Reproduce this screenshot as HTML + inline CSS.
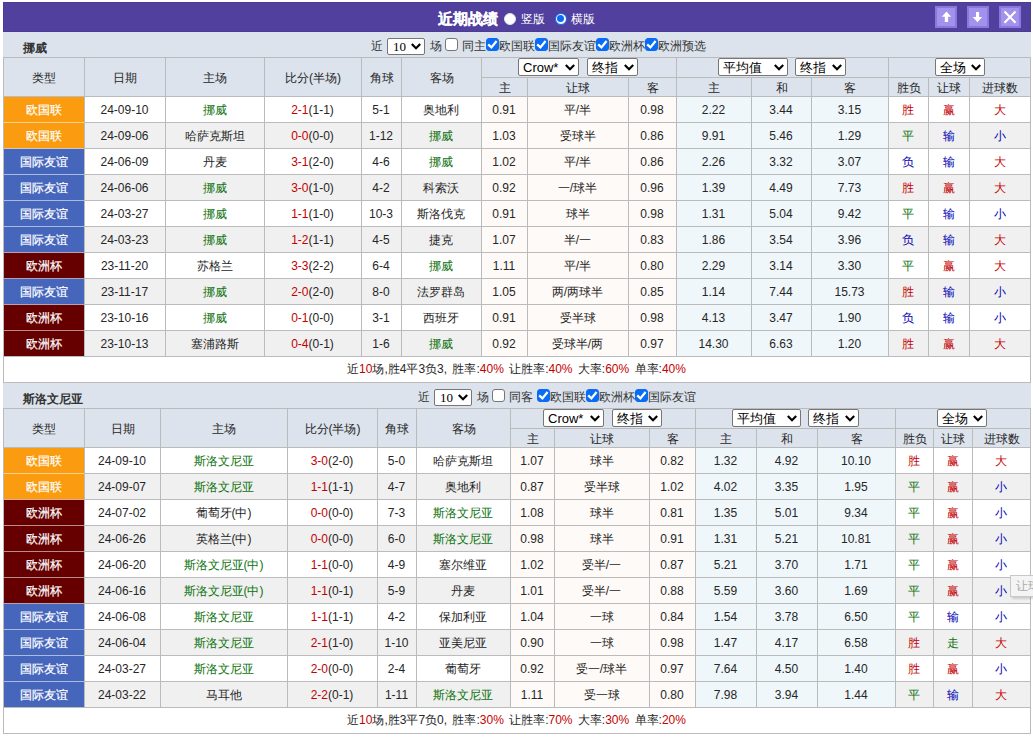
<!DOCTYPE html><html><head><meta charset="utf-8"><style>
html,body{margin:0;padding:0;background:#fff;}
body{width:1033px;height:737px;overflow:hidden;position:relative;font-family:"Liberation Sans", sans-serif;font-size:12px;color:#262626;}
div,span{box-sizing:border-box;}
body div{position:absolute;}
.t{text-align:center;white-space:nowrap;overflow:visible;}
.sel{background:#fff;border:1px solid #767676;border-radius:2px;color:#000;font-size:13px;}
.sel .lb{position:absolute;left:4px;top:0;line-height:17px;}
.filt{white-space:nowrap;height:20px;line-height:17px;color:#333;font-size:12px}
.filt span{display:inline-block;vertical-align:top;position:relative}
.ft{margin-right:4px}
.fsel{width:38px;height:17px;border:1px solid #767676;border-radius:2px;background:#fff;color:#000;font-family:"Liberation Serif",serif;font-size:13px;padding-left:5px;line-height:15px;margin-right:5px}
.cbx{width:13px;height:13px;border:1px solid #767676;border-radius:3px;background:#fff;margin:0 4px 0 0}
.cbx.on{background:#0a6cf5;border-color:#0a6cf5;margin-right:0}
.cbx svg{position:absolute;left:-1px;top:-1px}
</style></head><body><div style="left:3px;top:2px;width:1028px;height:30px;background:#51409d;box-shadow:inset 0 0 0 1px #4a3c93"></div>
<div style="left:3px;top:32px;width:1028px;height:1px;background:#e4e4f8;"></div>
<div class="t" style="left:438px;top:4px;width:70px;height:30px;line-height:30px;text-align:left;color:#fff;font-weight:bold;font-size:15px;-webkit-text-stroke:0.25px #fff">近期战绩</div>
<div style="left:504px;top:12.5px;width:12px;height:12px;border-radius:50%;background:#fff;box-sizing:border-box;border:1px solid #e0e0ea"></div>
<div class="t" style="left:521px;top:4px;width:30px;height:30px;line-height:30px;text-align:left;color:#fff">竖版</div>
<div style="left:554.5px;top:12.5px;width:12px;height:12px;border-radius:50%;background:#fff;box-sizing:border-box;border:1.2px solid #0a6cf5"><div style="left:1.4px;top:1.4px;width:7px;height:7px;border-radius:50%;background:#0a6cf5"></div></div>
<div class="t" style="left:571px;top:4px;width:30px;height:30px;line-height:30px;text-align:left;color:#fff">横版</div>
<div style="left:935px;top:6px;width:22px;height:22px;background:#8a79da;"><div style="left:2px;top:2px;width:18px;height:18px;background:#a392ed"><svg width="18" height="18" viewBox="0 0 18 18" style="position:absolute;left:0;top:0"><path d="M9.5 3.6 L14.2 8.7 L11.1 8.7 L11.1 14 L7.8 14 L7.8 8.7 L4.8 8.7 Z" fill="#fff"/></svg></div></div>
<div style="left:967px;top:6px;width:22px;height:22px;background:#8a79da;"><div style="left:2px;top:2px;width:18px;height:18px;background:#a392ed"><svg width="18" height="18" viewBox="0 0 18 18" style="position:absolute;left:0;top:0"><path d="M8.5 14.2 L13.2 8.9 L10.1 8.9 L10.1 4 L7 4 L7 8.9 L3.7 8.9 Z" fill="#fff"/></svg></div></div>
<div style="left:999px;top:6px;width:22px;height:22px;background:#8a79da;"><div style="left:2px;top:2px;width:18px;height:18px;background:#a392ed"><svg width="18" height="18" viewBox="0 0 18 18" style="position:absolute;left:0;top:0"><path d="M3.5 3.5 L14.5 14.7 M14.5 3.5 L3.5 14.7" stroke="#fff" stroke-width="2.1"/></svg></div></div>
<div style="left:3px;top:32px;width:1028px;height:25px;background:#dce3ec;"></div>
<div class="t" style="left:23px;top:36px;width:100px;height:25px;line-height:25px;font-weight:bold;color:#333;text-align:left">挪威</div>
<div class="filt" style="left:371px;top:38px"><span class="ft">近</span><span class="fsel">10<svg width="10" height="7" viewBox="0 0 10 7" style="position:absolute;right:3px;top:4px"><path d="M0.8 1 L5 5.3 L9.2 1" fill="none" stroke="#000" stroke-width="2.1"/></svg></span><span class="ft" style="margin-right:3px">场</span><span class="cbx"></span><span class="ft2" style="margin-right:0">同主</span><span class="cbx on"><svg width="13" height="13" viewBox="0 0 13 13"><path d="M2.2 6.4 L5.4 9.4 L10.6 3" fill="none" stroke="#fff" stroke-width="2.3"/></svg></span><span class="ft3">欧国联</span><span class="cbx on"><svg width="13" height="13" viewBox="0 0 13 13"><path d="M2.2 6.4 L5.4 9.4 L10.6 3" fill="none" stroke="#fff" stroke-width="2.3"/></svg></span><span class="ft3">国际友谊</span><span class="cbx on"><svg width="13" height="13" viewBox="0 0 13 13"><path d="M2.2 6.4 L5.4 9.4 L10.6 3" fill="none" stroke="#fff" stroke-width="2.3"/></svg></span><span class="ft3">欧洲杯</span><span class="cbx on"><svg width="13" height="13" viewBox="0 0 13 13"><path d="M2.2 6.4 L5.4 9.4 L10.6 3" fill="none" stroke="#fff" stroke-width="2.3"/></svg></span><span class="ft3">欧洲预选</span></div>
<div style="left:3px;top:57px;width:1028px;height:39px;background:#dce3ec;"></div>
<div style="left:3px;top:96px;width:1028px;height:26px;background:#ffffff;"></div>
<div style="left:481px;top:96px;width:195px;height:26px;background:#fefaf7;"></div>
<div style="left:676px;top:96px;width:212px;height:26px;background:#f0f7fb;"></div>
<div style="left:3px;top:96px;width:81px;height:26px;background:#fa9b10;"></div>
<div style="left:3px;top:122px;width:1028px;height:26px;background:#f0f0f0;"></div>
<div style="left:481px;top:122px;width:195px;height:26px;background:#fefaf7;"></div>
<div style="left:676px;top:122px;width:212px;height:26px;background:#f0f7fb;"></div>
<div style="left:3px;top:122px;width:81px;height:26px;background:#fa9b10;"></div>
<div style="left:3px;top:148px;width:1028px;height:26px;background:#ffffff;"></div>
<div style="left:481px;top:148px;width:195px;height:26px;background:#fefaf7;"></div>
<div style="left:676px;top:148px;width:212px;height:26px;background:#f0f7fb;"></div>
<div style="left:3px;top:148px;width:81px;height:26px;background:#4666bc;"></div>
<div style="left:3px;top:174px;width:1028px;height:26px;background:#f0f0f0;"></div>
<div style="left:481px;top:174px;width:195px;height:26px;background:#fefaf7;"></div>
<div style="left:676px;top:174px;width:212px;height:26px;background:#f0f7fb;"></div>
<div style="left:3px;top:174px;width:81px;height:26px;background:#4666bc;"></div>
<div style="left:3px;top:200px;width:1028px;height:26px;background:#ffffff;"></div>
<div style="left:481px;top:200px;width:195px;height:26px;background:#fefaf7;"></div>
<div style="left:676px;top:200px;width:212px;height:26px;background:#f0f7fb;"></div>
<div style="left:3px;top:200px;width:81px;height:26px;background:#4666bc;"></div>
<div style="left:3px;top:226px;width:1028px;height:26px;background:#f0f0f0;"></div>
<div style="left:481px;top:226px;width:195px;height:26px;background:#fefaf7;"></div>
<div style="left:676px;top:226px;width:212px;height:26px;background:#f0f7fb;"></div>
<div style="left:3px;top:226px;width:81px;height:26px;background:#4666bc;"></div>
<div style="left:3px;top:252px;width:1028px;height:26px;background:#ffffff;"></div>
<div style="left:481px;top:252px;width:195px;height:26px;background:#fefaf7;"></div>
<div style="left:676px;top:252px;width:212px;height:26px;background:#f0f7fb;"></div>
<div style="left:3px;top:252px;width:81px;height:26px;background:#660000;"></div>
<div style="left:3px;top:278px;width:1028px;height:26px;background:#f0f0f0;"></div>
<div style="left:481px;top:278px;width:195px;height:26px;background:#fefaf7;"></div>
<div style="left:676px;top:278px;width:212px;height:26px;background:#f0f7fb;"></div>
<div style="left:3px;top:278px;width:81px;height:26px;background:#4666bc;"></div>
<div style="left:3px;top:304px;width:1028px;height:26px;background:#ffffff;"></div>
<div style="left:481px;top:304px;width:195px;height:26px;background:#fefaf7;"></div>
<div style="left:676px;top:304px;width:212px;height:26px;background:#f0f7fb;"></div>
<div style="left:3px;top:304px;width:81px;height:26px;background:#660000;"></div>
<div style="left:3px;top:330px;width:1028px;height:26px;background:#f0f0f0;"></div>
<div style="left:481px;top:330px;width:195px;height:26px;background:#fefaf7;"></div>
<div style="left:676px;top:330px;width:212px;height:26px;background:#f0f7fb;"></div>
<div style="left:3px;top:330px;width:81px;height:26px;background:#660000;"></div>
<div style="left:3px;top:356px;width:1028px;height:26px;background:#ffffff;"></div>
<div style="left:3px;top:57px;width:1028px;height:1px;background:#bbbbbb;"></div>
<div style="left:481px;top:77px;width:550px;height:1px;background:#bbbbbb;"></div>
<div style="left:3px;top:96px;width:1028px;height:1px;background:#bbbbbb;"></div>
<div style="left:3px;top:122px;width:1028px;height:1px;background:#bbbbbb;"></div>
<div style="left:3px;top:148px;width:1028px;height:1px;background:#bbbbbb;"></div>
<div style="left:3px;top:174px;width:1028px;height:1px;background:#bbbbbb;"></div>
<div style="left:3px;top:200px;width:1028px;height:1px;background:#bbbbbb;"></div>
<div style="left:3px;top:226px;width:1028px;height:1px;background:#bbbbbb;"></div>
<div style="left:3px;top:252px;width:1028px;height:1px;background:#bbbbbb;"></div>
<div style="left:3px;top:278px;width:1028px;height:1px;background:#bbbbbb;"></div>
<div style="left:3px;top:304px;width:1028px;height:1px;background:#bbbbbb;"></div>
<div style="left:3px;top:330px;width:1028px;height:1px;background:#bbbbbb;"></div>
<div style="left:3px;top:356px;width:1028px;height:1px;background:#bbbbbb;"></div>
<div style="left:3px;top:382px;width:1028px;height:1px;background:#bbbbbb;"></div>
<div style="left:3px;top:57px;width:1px;height:326px;background:#bbbbbb;"></div>
<div style="left:1030px;top:57px;width:1px;height:326px;background:#bbbbbb;"></div>
<div style="left:84px;top:57px;width:1px;height:300px;background:#bbbbbb;"></div>
<div style="left:165px;top:57px;width:1px;height:300px;background:#bbbbbb;"></div>
<div style="left:264px;top:57px;width:1px;height:300px;background:#bbbbbb;"></div>
<div style="left:361px;top:57px;width:1px;height:300px;background:#bbbbbb;"></div>
<div style="left:401px;top:57px;width:1px;height:300px;background:#bbbbbb;"></div>
<div style="left:481px;top:57px;width:1px;height:300px;background:#bbbbbb;"></div>
<div style="left:527px;top:77px;width:1px;height:280px;background:#bbbbbb;"></div>
<div style="left:628px;top:77px;width:1px;height:280px;background:#bbbbbb;"></div>
<div style="left:676px;top:57px;width:1px;height:300px;background:#bbbbbb;"></div>
<div style="left:751px;top:77px;width:1px;height:280px;background:#bbbbbb;"></div>
<div style="left:811px;top:77px;width:1px;height:280px;background:#bbbbbb;"></div>
<div style="left:888px;top:57px;width:1px;height:300px;background:#bbbbbb;"></div>
<div style="left:928px;top:77px;width:1px;height:280px;background:#bbbbbb;"></div>
<div style="left:969px;top:77px;width:1px;height:280px;background:#bbbbbb;"></div>
<div style="left:4px;top:122px;width:80px;height:1px;background:#fcd293;"></div>
<div style="left:4px;top:148px;width:80px;height:1px;background:#d4c6ba;"></div>
<div style="left:4px;top:174px;width:80px;height:1px;background:#abbae0;"></div>
<div style="left:4px;top:200px;width:80px;height:1px;background:#abbae0;"></div>
<div style="left:4px;top:226px;width:80px;height:1px;background:#abbae0;"></div>
<div style="left:4px;top:252px;width:80px;height:1px;background:#b2a3b6;"></div>
<div style="left:4px;top:278px;width:80px;height:1px;background:#b2a3b6;"></div>
<div style="left:4px;top:304px;width:80px;height:1px;background:#b2a3b6;"></div>
<div style="left:4px;top:330px;width:80px;height:1px;background:#ba8c8c;"></div>
<div class="t" style="left:4px;top:59px;width:80px;height:38px;line-height:38px;">类型</div>
<div class="t" style="left:85px;top:59px;width:80px;height:38px;line-height:38px;">日期</div>
<div class="t" style="left:166px;top:59px;width:98px;height:38px;line-height:38px;">主场</div>
<div class="t" style="left:265px;top:59px;width:96px;height:38px;line-height:38px;">比分(半场)</div>
<div class="t" style="left:362px;top:59px;width:39px;height:38px;line-height:38px;">角球</div>
<div class="t" style="left:402px;top:59px;width:79px;height:38px;line-height:38px;">客场</div>
<div class="t" style="left:482px;top:79px;width:45px;height:18px;line-height:18px;">主</div>
<div class="t" style="left:528px;top:79px;width:100px;height:18px;line-height:18px;">让球</div>
<div class="t" style="left:629px;top:79px;width:47px;height:18px;line-height:18px;">客</div>
<div class="t" style="left:677px;top:79px;width:74px;height:18px;line-height:18px;">主</div>
<div class="t" style="left:752px;top:79px;width:59px;height:18px;line-height:18px;">和</div>
<div class="t" style="left:812px;top:79px;width:76px;height:18px;line-height:18px;">客</div>
<div class="t" style="left:889px;top:79px;width:39px;height:18px;line-height:18px;">胜负</div>
<div class="t" style="left:929px;top:79px;width:40px;height:18px;line-height:18px;">让球</div>
<div class="t" style="left:970px;top:79px;width:60px;height:18px;line-height:18px;">进球数</div>
<div class="sel" style="left:518px;top:58px;width:61px;height:18px;"><span class="lb">Crow*</span><svg class="chev" width="10" height="7" viewBox="0 0 10 7" style="position:absolute;right:3px;top:5px"><path d="M0.8 1 L5 5.3 L9.2 1" fill="none" stroke="#000" stroke-width="2.1"/></svg></div>
<div class="sel" style="left:587px;top:58px;width:51px;height:18px;"><span class="lb">终指</span><svg class="chev" width="10" height="7" viewBox="0 0 10 7" style="position:absolute;right:3px;top:5px"><path d="M0.8 1 L5 5.3 L9.2 1" fill="none" stroke="#000" stroke-width="2.1"/></svg></div>
<div class="sel" style="left:718px;top:58px;width:70px;height:18px;"><span class="lb">平均值</span><svg class="chev" width="10" height="7" viewBox="0 0 10 7" style="position:absolute;right:3px;top:5px"><path d="M0.8 1 L5 5.3 L9.2 1" fill="none" stroke="#000" stroke-width="2.1"/></svg></div>
<div class="sel" style="left:795px;top:58px;width:51px;height:18px;"><span class="lb">终指</span><svg class="chev" width="10" height="7" viewBox="0 0 10 7" style="position:absolute;right:3px;top:5px"><path d="M0.8 1 L5 5.3 L9.2 1" fill="none" stroke="#000" stroke-width="2.1"/></svg></div>
<div class="sel" style="left:935px;top:58px;width:50px;height:18px;"><span class="lb">全场</span><svg class="chev" width="10" height="7" viewBox="0 0 10 7" style="position:absolute;right:3px;top:5px"><path d="M0.8 1 L5 5.3 L9.2 1" fill="none" stroke="#000" stroke-width="2.1"/></svg></div>
<div class="t" style="left:3px;top:97px;width:81px;height:26px;line-height:26px;color:#fff;-webkit-text-stroke:0.2px #fff">欧国联</div>
<div class="t" style="left:84px;top:97px;width:81px;height:26px;line-height:26px;">24-09-10</div>
<div class="t" style="left:165px;top:97px;width:99px;height:26px;line-height:26px;"><span style="color:#0d720d">挪威</span></div>
<div class="t" style="left:264px;top:97px;width:97px;height:26px;line-height:26px;"><span style="color:#c40000">2-1</span>(1-1)</div>
<div class="t" style="left:361px;top:97px;width:40px;height:26px;line-height:26px;">5-1</div>
<div class="t" style="left:401px;top:97px;width:80px;height:26px;line-height:26px;">奥地利</div>
<div class="t" style="left:481px;top:97px;width:46px;height:26px;line-height:26px;">0.91</div>
<div class="t" style="left:527px;top:97px;width:101px;height:26px;line-height:26px;">平/半</div>
<div class="t" style="left:628px;top:97px;width:48px;height:26px;line-height:26px;">0.98</div>
<div class="t" style="left:676px;top:97px;width:75px;height:26px;line-height:26px;">2.22</div>
<div class="t" style="left:751px;top:97px;width:60px;height:26px;line-height:26px;">3.44</div>
<div class="t" style="left:811px;top:97px;width:77px;height:26px;line-height:26px;">3.15</div>
<div class="t" style="left:888px;top:97px;width:40px;height:26px;line-height:26px;"><span style="color:#c40000">胜</span></div>
<div class="t" style="left:928px;top:97px;width:41px;height:26px;line-height:26px;"><span style="color:#c40000">赢</span></div>
<div class="t" style="left:969px;top:97px;width:61px;height:26px;line-height:26px;"><span style="color:#c40000">大</span></div>
<div class="t" style="left:3px;top:123px;width:81px;height:26px;line-height:26px;color:#fff;-webkit-text-stroke:0.2px #fff">欧国联</div>
<div class="t" style="left:84px;top:123px;width:81px;height:26px;line-height:26px;">24-09-06</div>
<div class="t" style="left:165px;top:123px;width:99px;height:26px;line-height:26px;">哈萨克斯坦</div>
<div class="t" style="left:264px;top:123px;width:97px;height:26px;line-height:26px;"><span style="color:#c40000">0-0</span>(0-0)</div>
<div class="t" style="left:361px;top:123px;width:40px;height:26px;line-height:26px;">1-12</div>
<div class="t" style="left:401px;top:123px;width:80px;height:26px;line-height:26px;"><span style="color:#0d720d">挪威</span></div>
<div class="t" style="left:481px;top:123px;width:46px;height:26px;line-height:26px;">1.03</div>
<div class="t" style="left:527px;top:123px;width:101px;height:26px;line-height:26px;">受球半</div>
<div class="t" style="left:628px;top:123px;width:48px;height:26px;line-height:26px;">0.86</div>
<div class="t" style="left:676px;top:123px;width:75px;height:26px;line-height:26px;">9.91</div>
<div class="t" style="left:751px;top:123px;width:60px;height:26px;line-height:26px;">5.46</div>
<div class="t" style="left:811px;top:123px;width:77px;height:26px;line-height:26px;">1.29</div>
<div class="t" style="left:888px;top:123px;width:40px;height:26px;line-height:26px;"><span style="color:#0d720d">平</span></div>
<div class="t" style="left:928px;top:123px;width:41px;height:26px;line-height:26px;"><span style="color:#0000b4">输</span></div>
<div class="t" style="left:969px;top:123px;width:61px;height:26px;line-height:26px;"><span style="color:#0000b4">小</span></div>
<div class="t" style="left:3px;top:149px;width:81px;height:26px;line-height:26px;color:#fff;-webkit-text-stroke:0.2px #fff">国际友谊</div>
<div class="t" style="left:84px;top:149px;width:81px;height:26px;line-height:26px;">24-06-09</div>
<div class="t" style="left:165px;top:149px;width:99px;height:26px;line-height:26px;">丹麦</div>
<div class="t" style="left:264px;top:149px;width:97px;height:26px;line-height:26px;"><span style="color:#c40000">3-1</span>(2-0)</div>
<div class="t" style="left:361px;top:149px;width:40px;height:26px;line-height:26px;">4-6</div>
<div class="t" style="left:401px;top:149px;width:80px;height:26px;line-height:26px;"><span style="color:#0d720d">挪威</span></div>
<div class="t" style="left:481px;top:149px;width:46px;height:26px;line-height:26px;">1.02</div>
<div class="t" style="left:527px;top:149px;width:101px;height:26px;line-height:26px;">平/半</div>
<div class="t" style="left:628px;top:149px;width:48px;height:26px;line-height:26px;">0.86</div>
<div class="t" style="left:676px;top:149px;width:75px;height:26px;line-height:26px;">2.26</div>
<div class="t" style="left:751px;top:149px;width:60px;height:26px;line-height:26px;">3.32</div>
<div class="t" style="left:811px;top:149px;width:77px;height:26px;line-height:26px;">3.07</div>
<div class="t" style="left:888px;top:149px;width:40px;height:26px;line-height:26px;"><span style="color:#0000b4">负</span></div>
<div class="t" style="left:928px;top:149px;width:41px;height:26px;line-height:26px;"><span style="color:#0000b4">输</span></div>
<div class="t" style="left:969px;top:149px;width:61px;height:26px;line-height:26px;"><span style="color:#c40000">大</span></div>
<div class="t" style="left:3px;top:175px;width:81px;height:26px;line-height:26px;color:#fff;-webkit-text-stroke:0.2px #fff">国际友谊</div>
<div class="t" style="left:84px;top:175px;width:81px;height:26px;line-height:26px;">24-06-06</div>
<div class="t" style="left:165px;top:175px;width:99px;height:26px;line-height:26px;"><span style="color:#0d720d">挪威</span></div>
<div class="t" style="left:264px;top:175px;width:97px;height:26px;line-height:26px;"><span style="color:#c40000">3-0</span>(1-0)</div>
<div class="t" style="left:361px;top:175px;width:40px;height:26px;line-height:26px;">4-2</div>
<div class="t" style="left:401px;top:175px;width:80px;height:26px;line-height:26px;">科索沃</div>
<div class="t" style="left:481px;top:175px;width:46px;height:26px;line-height:26px;">0.92</div>
<div class="t" style="left:527px;top:175px;width:101px;height:26px;line-height:26px;">一/球半</div>
<div class="t" style="left:628px;top:175px;width:48px;height:26px;line-height:26px;">0.96</div>
<div class="t" style="left:676px;top:175px;width:75px;height:26px;line-height:26px;">1.39</div>
<div class="t" style="left:751px;top:175px;width:60px;height:26px;line-height:26px;">4.49</div>
<div class="t" style="left:811px;top:175px;width:77px;height:26px;line-height:26px;">7.73</div>
<div class="t" style="left:888px;top:175px;width:40px;height:26px;line-height:26px;"><span style="color:#c40000">胜</span></div>
<div class="t" style="left:928px;top:175px;width:41px;height:26px;line-height:26px;"><span style="color:#c40000">赢</span></div>
<div class="t" style="left:969px;top:175px;width:61px;height:26px;line-height:26px;"><span style="color:#c40000">大</span></div>
<div class="t" style="left:3px;top:201px;width:81px;height:26px;line-height:26px;color:#fff;-webkit-text-stroke:0.2px #fff">国际友谊</div>
<div class="t" style="left:84px;top:201px;width:81px;height:26px;line-height:26px;">24-03-27</div>
<div class="t" style="left:165px;top:201px;width:99px;height:26px;line-height:26px;"><span style="color:#0d720d">挪威</span></div>
<div class="t" style="left:264px;top:201px;width:97px;height:26px;line-height:26px;"><span style="color:#c40000">1-1</span>(1-0)</div>
<div class="t" style="left:361px;top:201px;width:40px;height:26px;line-height:26px;">10-3</div>
<div class="t" style="left:401px;top:201px;width:80px;height:26px;line-height:26px;">斯洛伐克</div>
<div class="t" style="left:481px;top:201px;width:46px;height:26px;line-height:26px;">0.91</div>
<div class="t" style="left:527px;top:201px;width:101px;height:26px;line-height:26px;">球半</div>
<div class="t" style="left:628px;top:201px;width:48px;height:26px;line-height:26px;">0.98</div>
<div class="t" style="left:676px;top:201px;width:75px;height:26px;line-height:26px;">1.31</div>
<div class="t" style="left:751px;top:201px;width:60px;height:26px;line-height:26px;">5.04</div>
<div class="t" style="left:811px;top:201px;width:77px;height:26px;line-height:26px;">9.42</div>
<div class="t" style="left:888px;top:201px;width:40px;height:26px;line-height:26px;"><span style="color:#0d720d">平</span></div>
<div class="t" style="left:928px;top:201px;width:41px;height:26px;line-height:26px;"><span style="color:#0000b4">输</span></div>
<div class="t" style="left:969px;top:201px;width:61px;height:26px;line-height:26px;"><span style="color:#0000b4">小</span></div>
<div class="t" style="left:3px;top:227px;width:81px;height:26px;line-height:26px;color:#fff;-webkit-text-stroke:0.2px #fff">国际友谊</div>
<div class="t" style="left:84px;top:227px;width:81px;height:26px;line-height:26px;">24-03-23</div>
<div class="t" style="left:165px;top:227px;width:99px;height:26px;line-height:26px;"><span style="color:#0d720d">挪威</span></div>
<div class="t" style="left:264px;top:227px;width:97px;height:26px;line-height:26px;"><span style="color:#c40000">1-2</span>(1-1)</div>
<div class="t" style="left:361px;top:227px;width:40px;height:26px;line-height:26px;">4-5</div>
<div class="t" style="left:401px;top:227px;width:80px;height:26px;line-height:26px;">捷克</div>
<div class="t" style="left:481px;top:227px;width:46px;height:26px;line-height:26px;">1.07</div>
<div class="t" style="left:527px;top:227px;width:101px;height:26px;line-height:26px;">半/一</div>
<div class="t" style="left:628px;top:227px;width:48px;height:26px;line-height:26px;">0.83</div>
<div class="t" style="left:676px;top:227px;width:75px;height:26px;line-height:26px;">1.86</div>
<div class="t" style="left:751px;top:227px;width:60px;height:26px;line-height:26px;">3.54</div>
<div class="t" style="left:811px;top:227px;width:77px;height:26px;line-height:26px;">3.96</div>
<div class="t" style="left:888px;top:227px;width:40px;height:26px;line-height:26px;"><span style="color:#0000b4">负</span></div>
<div class="t" style="left:928px;top:227px;width:41px;height:26px;line-height:26px;"><span style="color:#0000b4">输</span></div>
<div class="t" style="left:969px;top:227px;width:61px;height:26px;line-height:26px;"><span style="color:#c40000">大</span></div>
<div class="t" style="left:3px;top:253px;width:81px;height:26px;line-height:26px;color:#fff;-webkit-text-stroke:0.2px #fff">欧洲杯</div>
<div class="t" style="left:84px;top:253px;width:81px;height:26px;line-height:26px;">23-11-20</div>
<div class="t" style="left:165px;top:253px;width:99px;height:26px;line-height:26px;">苏格兰</div>
<div class="t" style="left:264px;top:253px;width:97px;height:26px;line-height:26px;"><span style="color:#c40000">3-3</span>(2-2)</div>
<div class="t" style="left:361px;top:253px;width:40px;height:26px;line-height:26px;">6-4</div>
<div class="t" style="left:401px;top:253px;width:80px;height:26px;line-height:26px;"><span style="color:#0d720d">挪威</span></div>
<div class="t" style="left:481px;top:253px;width:46px;height:26px;line-height:26px;">1.11</div>
<div class="t" style="left:527px;top:253px;width:101px;height:26px;line-height:26px;">平/半</div>
<div class="t" style="left:628px;top:253px;width:48px;height:26px;line-height:26px;">0.80</div>
<div class="t" style="left:676px;top:253px;width:75px;height:26px;line-height:26px;">2.29</div>
<div class="t" style="left:751px;top:253px;width:60px;height:26px;line-height:26px;">3.14</div>
<div class="t" style="left:811px;top:253px;width:77px;height:26px;line-height:26px;">3.30</div>
<div class="t" style="left:888px;top:253px;width:40px;height:26px;line-height:26px;"><span style="color:#0d720d">平</span></div>
<div class="t" style="left:928px;top:253px;width:41px;height:26px;line-height:26px;"><span style="color:#c40000">赢</span></div>
<div class="t" style="left:969px;top:253px;width:61px;height:26px;line-height:26px;"><span style="color:#c40000">大</span></div>
<div class="t" style="left:3px;top:279px;width:81px;height:26px;line-height:26px;color:#fff;-webkit-text-stroke:0.2px #fff">国际友谊</div>
<div class="t" style="left:84px;top:279px;width:81px;height:26px;line-height:26px;">23-11-17</div>
<div class="t" style="left:165px;top:279px;width:99px;height:26px;line-height:26px;"><span style="color:#0d720d">挪威</span></div>
<div class="t" style="left:264px;top:279px;width:97px;height:26px;line-height:26px;"><span style="color:#c40000">2-0</span>(2-0)</div>
<div class="t" style="left:361px;top:279px;width:40px;height:26px;line-height:26px;">8-0</div>
<div class="t" style="left:401px;top:279px;width:80px;height:26px;line-height:26px;">法罗群岛</div>
<div class="t" style="left:481px;top:279px;width:46px;height:26px;line-height:26px;">1.05</div>
<div class="t" style="left:527px;top:279px;width:101px;height:26px;line-height:26px;">两/两球半</div>
<div class="t" style="left:628px;top:279px;width:48px;height:26px;line-height:26px;">0.85</div>
<div class="t" style="left:676px;top:279px;width:75px;height:26px;line-height:26px;">1.14</div>
<div class="t" style="left:751px;top:279px;width:60px;height:26px;line-height:26px;">7.44</div>
<div class="t" style="left:811px;top:279px;width:77px;height:26px;line-height:26px;">15.73</div>
<div class="t" style="left:888px;top:279px;width:40px;height:26px;line-height:26px;"><span style="color:#c40000">胜</span></div>
<div class="t" style="left:928px;top:279px;width:41px;height:26px;line-height:26px;"><span style="color:#0000b4">输</span></div>
<div class="t" style="left:969px;top:279px;width:61px;height:26px;line-height:26px;"><span style="color:#0000b4">小</span></div>
<div class="t" style="left:3px;top:305px;width:81px;height:26px;line-height:26px;color:#fff;-webkit-text-stroke:0.2px #fff">欧洲杯</div>
<div class="t" style="left:84px;top:305px;width:81px;height:26px;line-height:26px;">23-10-16</div>
<div class="t" style="left:165px;top:305px;width:99px;height:26px;line-height:26px;"><span style="color:#0d720d">挪威</span></div>
<div class="t" style="left:264px;top:305px;width:97px;height:26px;line-height:26px;"><span style="color:#c40000">0-1</span>(0-0)</div>
<div class="t" style="left:361px;top:305px;width:40px;height:26px;line-height:26px;">3-1</div>
<div class="t" style="left:401px;top:305px;width:80px;height:26px;line-height:26px;">西班牙</div>
<div class="t" style="left:481px;top:305px;width:46px;height:26px;line-height:26px;">0.91</div>
<div class="t" style="left:527px;top:305px;width:101px;height:26px;line-height:26px;">受半球</div>
<div class="t" style="left:628px;top:305px;width:48px;height:26px;line-height:26px;">0.98</div>
<div class="t" style="left:676px;top:305px;width:75px;height:26px;line-height:26px;">4.13</div>
<div class="t" style="left:751px;top:305px;width:60px;height:26px;line-height:26px;">3.47</div>
<div class="t" style="left:811px;top:305px;width:77px;height:26px;line-height:26px;">1.90</div>
<div class="t" style="left:888px;top:305px;width:40px;height:26px;line-height:26px;"><span style="color:#0000b4">负</span></div>
<div class="t" style="left:928px;top:305px;width:41px;height:26px;line-height:26px;"><span style="color:#0000b4">输</span></div>
<div class="t" style="left:969px;top:305px;width:61px;height:26px;line-height:26px;"><span style="color:#0000b4">小</span></div>
<div class="t" style="left:3px;top:331px;width:81px;height:26px;line-height:26px;color:#fff;-webkit-text-stroke:0.2px #fff">欧洲杯</div>
<div class="t" style="left:84px;top:331px;width:81px;height:26px;line-height:26px;">23-10-13</div>
<div class="t" style="left:165px;top:331px;width:99px;height:26px;line-height:26px;">塞浦路斯</div>
<div class="t" style="left:264px;top:331px;width:97px;height:26px;line-height:26px;"><span style="color:#c40000">0-4</span>(0-1)</div>
<div class="t" style="left:361px;top:331px;width:40px;height:26px;line-height:26px;">1-6</div>
<div class="t" style="left:401px;top:331px;width:80px;height:26px;line-height:26px;"><span style="color:#0d720d">挪威</span></div>
<div class="t" style="left:481px;top:331px;width:46px;height:26px;line-height:26px;">0.92</div>
<div class="t" style="left:527px;top:331px;width:101px;height:26px;line-height:26px;">受球半/两</div>
<div class="t" style="left:628px;top:331px;width:48px;height:26px;line-height:26px;">0.97</div>
<div class="t" style="left:676px;top:331px;width:75px;height:26px;line-height:26px;">14.30</div>
<div class="t" style="left:751px;top:331px;width:60px;height:26px;line-height:26px;">6.63</div>
<div class="t" style="left:811px;top:331px;width:77px;height:26px;line-height:26px;">1.20</div>
<div class="t" style="left:888px;top:331px;width:40px;height:26px;line-height:26px;"><span style="color:#c40000">胜</span></div>
<div class="t" style="left:928px;top:331px;width:41px;height:26px;line-height:26px;"><span style="color:#c40000">赢</span></div>
<div class="t" style="left:969px;top:331px;width:61px;height:26px;line-height:26px;"><span style="color:#c40000">大</span></div>
<div class="t" style="left:3px;top:357px;width:1027px;height:25px;line-height:25px;word-spacing:2px">近<span style="color:#c40000">10</span>场,胜4平3负3, 胜率:<span style="color:#c40000">40%</span> 让胜率:<span style="color:#c40000">40%</span> 大率:<span style="color:#c40000">60%</span> 单率:<span style="color:#c40000">40%</span></div>
<div style="left:3px;top:383px;width:1028px;height:25px;background:#dce3ec;"></div>
<div class="t" style="left:23px;top:387px;width:100px;height:25px;line-height:25px;font-weight:bold;color:#333;text-align:left">斯洛文尼亚</div>
<div class="filt" style="left:418px;top:389px"><span class="ft">近</span><span class="fsel">10<svg width="10" height="7" viewBox="0 0 10 7" style="position:absolute;right:3px;top:4px"><path d="M0.8 1 L5 5.3 L9.2 1" fill="none" stroke="#000" stroke-width="2.1"/></svg></span><span class="ft" style="margin-right:3px">场</span><span class="cbx"></span><span class="ft2" style="margin-right:4px">同客</span><span class="cbx on"><svg width="13" height="13" viewBox="0 0 13 13"><path d="M2.2 6.4 L5.4 9.4 L10.6 3" fill="none" stroke="#fff" stroke-width="2.3"/></svg></span><span class="ft3">欧国联</span><span class="cbx on"><svg width="13" height="13" viewBox="0 0 13 13"><path d="M2.2 6.4 L5.4 9.4 L10.6 3" fill="none" stroke="#fff" stroke-width="2.3"/></svg></span><span class="ft3">欧洲杯</span><span class="cbx on"><svg width="13" height="13" viewBox="0 0 13 13"><path d="M2.2 6.4 L5.4 9.4 L10.6 3" fill="none" stroke="#fff" stroke-width="2.3"/></svg></span><span class="ft3">国际友谊</span></div>
<div style="left:3px;top:408px;width:1028px;height:39px;background:#dce3ec;"></div>
<div style="left:3px;top:447px;width:1028px;height:26px;background:#ffffff;"></div>
<div style="left:510px;top:447px;width:185px;height:26px;background:#fefaf7;"></div>
<div style="left:695px;top:447px;width:200px;height:26px;background:#f0f7fb;"></div>
<div style="left:3px;top:447px;width:81px;height:26px;background:#fa9b10;"></div>
<div style="left:3px;top:473px;width:1028px;height:26px;background:#f0f0f0;"></div>
<div style="left:510px;top:473px;width:185px;height:26px;background:#fefaf7;"></div>
<div style="left:695px;top:473px;width:200px;height:26px;background:#f0f7fb;"></div>
<div style="left:3px;top:473px;width:81px;height:26px;background:#fa9b10;"></div>
<div style="left:3px;top:499px;width:1028px;height:26px;background:#ffffff;"></div>
<div style="left:510px;top:499px;width:185px;height:26px;background:#fefaf7;"></div>
<div style="left:695px;top:499px;width:200px;height:26px;background:#f0f7fb;"></div>
<div style="left:3px;top:499px;width:81px;height:26px;background:#660000;"></div>
<div style="left:3px;top:525px;width:1028px;height:26px;background:#f0f0f0;"></div>
<div style="left:510px;top:525px;width:185px;height:26px;background:#fefaf7;"></div>
<div style="left:695px;top:525px;width:200px;height:26px;background:#f0f7fb;"></div>
<div style="left:3px;top:525px;width:81px;height:26px;background:#660000;"></div>
<div style="left:3px;top:551px;width:1028px;height:26px;background:#ffffff;"></div>
<div style="left:510px;top:551px;width:185px;height:26px;background:#fefaf7;"></div>
<div style="left:695px;top:551px;width:200px;height:26px;background:#f0f7fb;"></div>
<div style="left:3px;top:551px;width:81px;height:26px;background:#660000;"></div>
<div style="left:3px;top:577px;width:1028px;height:26px;background:#f0f0f0;"></div>
<div style="left:510px;top:577px;width:185px;height:26px;background:#fefaf7;"></div>
<div style="left:695px;top:577px;width:200px;height:26px;background:#f0f7fb;"></div>
<div style="left:3px;top:577px;width:81px;height:26px;background:#660000;"></div>
<div style="left:3px;top:603px;width:1028px;height:26px;background:#ffffff;"></div>
<div style="left:510px;top:603px;width:185px;height:26px;background:#fefaf7;"></div>
<div style="left:695px;top:603px;width:200px;height:26px;background:#f0f7fb;"></div>
<div style="left:3px;top:603px;width:81px;height:26px;background:#4666bc;"></div>
<div style="left:3px;top:629px;width:1028px;height:26px;background:#f0f0f0;"></div>
<div style="left:510px;top:629px;width:185px;height:26px;background:#fefaf7;"></div>
<div style="left:695px;top:629px;width:200px;height:26px;background:#f0f7fb;"></div>
<div style="left:3px;top:629px;width:81px;height:26px;background:#4666bc;"></div>
<div style="left:3px;top:655px;width:1028px;height:26px;background:#ffffff;"></div>
<div style="left:510px;top:655px;width:185px;height:26px;background:#fefaf7;"></div>
<div style="left:695px;top:655px;width:200px;height:26px;background:#f0f7fb;"></div>
<div style="left:3px;top:655px;width:81px;height:26px;background:#4666bc;"></div>
<div style="left:3px;top:681px;width:1028px;height:26px;background:#f0f0f0;"></div>
<div style="left:510px;top:681px;width:185px;height:26px;background:#fefaf7;"></div>
<div style="left:695px;top:681px;width:200px;height:26px;background:#f0f7fb;"></div>
<div style="left:3px;top:681px;width:81px;height:26px;background:#4666bc;"></div>
<div style="left:3px;top:707px;width:1028px;height:26px;background:#ffffff;"></div>
<div style="left:3px;top:408px;width:1028px;height:1px;background:#bbbbbb;"></div>
<div style="left:510px;top:428px;width:521px;height:1px;background:#bbbbbb;"></div>
<div style="left:3px;top:447px;width:1028px;height:1px;background:#bbbbbb;"></div>
<div style="left:3px;top:473px;width:1028px;height:1px;background:#bbbbbb;"></div>
<div style="left:3px;top:499px;width:1028px;height:1px;background:#bbbbbb;"></div>
<div style="left:3px;top:525px;width:1028px;height:1px;background:#bbbbbb;"></div>
<div style="left:3px;top:551px;width:1028px;height:1px;background:#bbbbbb;"></div>
<div style="left:3px;top:577px;width:1028px;height:1px;background:#bbbbbb;"></div>
<div style="left:3px;top:603px;width:1028px;height:1px;background:#bbbbbb;"></div>
<div style="left:3px;top:629px;width:1028px;height:1px;background:#bbbbbb;"></div>
<div style="left:3px;top:655px;width:1028px;height:1px;background:#bbbbbb;"></div>
<div style="left:3px;top:681px;width:1028px;height:1px;background:#bbbbbb;"></div>
<div style="left:3px;top:707px;width:1028px;height:1px;background:#bbbbbb;"></div>
<div style="left:3px;top:733px;width:1028px;height:1px;background:#bbbbbb;"></div>
<div style="left:3px;top:408px;width:1px;height:326px;background:#bbbbbb;"></div>
<div style="left:1030px;top:408px;width:1px;height:326px;background:#bbbbbb;"></div>
<div style="left:84px;top:408px;width:1px;height:300px;background:#bbbbbb;"></div>
<div style="left:160px;top:408px;width:1px;height:300px;background:#bbbbbb;"></div>
<div style="left:287px;top:408px;width:1px;height:300px;background:#bbbbbb;"></div>
<div style="left:377px;top:408px;width:1px;height:300px;background:#bbbbbb;"></div>
<div style="left:416px;top:408px;width:1px;height:300px;background:#bbbbbb;"></div>
<div style="left:510px;top:408px;width:1px;height:300px;background:#bbbbbb;"></div>
<div style="left:554px;top:428px;width:1px;height:280px;background:#bbbbbb;"></div>
<div style="left:649px;top:428px;width:1px;height:280px;background:#bbbbbb;"></div>
<div style="left:695px;top:408px;width:1px;height:300px;background:#bbbbbb;"></div>
<div style="left:756px;top:428px;width:1px;height:280px;background:#bbbbbb;"></div>
<div style="left:817px;top:428px;width:1px;height:280px;background:#bbbbbb;"></div>
<div style="left:895px;top:408px;width:1px;height:300px;background:#bbbbbb;"></div>
<div style="left:933px;top:428px;width:1px;height:280px;background:#bbbbbb;"></div>
<div style="left:972px;top:428px;width:1px;height:280px;background:#bbbbbb;"></div>
<div style="left:4px;top:473px;width:80px;height:1px;background:#fcd293;"></div>
<div style="left:4px;top:499px;width:80px;height:1px;background:#dbaf8f;"></div>
<div style="left:4px;top:525px;width:80px;height:1px;background:#ba8c8c;"></div>
<div style="left:4px;top:551px;width:80px;height:1px;background:#ba8c8c;"></div>
<div style="left:4px;top:577px;width:80px;height:1px;background:#ba8c8c;"></div>
<div style="left:4px;top:603px;width:80px;height:1px;background:#b2a3b6;"></div>
<div style="left:4px;top:629px;width:80px;height:1px;background:#abbae0;"></div>
<div style="left:4px;top:655px;width:80px;height:1px;background:#abbae0;"></div>
<div style="left:4px;top:681px;width:80px;height:1px;background:#abbae0;"></div>
<div class="t" style="left:4px;top:410px;width:80px;height:38px;line-height:38px;">类型</div>
<div class="t" style="left:85px;top:410px;width:75px;height:38px;line-height:38px;">日期</div>
<div class="t" style="left:161px;top:410px;width:126px;height:38px;line-height:38px;">主场</div>
<div class="t" style="left:288px;top:410px;width:89px;height:38px;line-height:38px;">比分(半场)</div>
<div class="t" style="left:378px;top:410px;width:38px;height:38px;line-height:38px;">角球</div>
<div class="t" style="left:417px;top:410px;width:93px;height:38px;line-height:38px;">客场</div>
<div class="t" style="left:511px;top:430px;width:43px;height:18px;line-height:18px;">主</div>
<div class="t" style="left:555px;top:430px;width:94px;height:18px;line-height:18px;">让球</div>
<div class="t" style="left:650px;top:430px;width:45px;height:18px;line-height:18px;">客</div>
<div class="t" style="left:696px;top:430px;width:60px;height:18px;line-height:18px;">主</div>
<div class="t" style="left:757px;top:430px;width:60px;height:18px;line-height:18px;">和</div>
<div class="t" style="left:818px;top:430px;width:77px;height:18px;line-height:18px;">客</div>
<div class="t" style="left:896px;top:430px;width:37px;height:18px;line-height:18px;">胜负</div>
<div class="t" style="left:934px;top:430px;width:38px;height:18px;line-height:18px;">让球</div>
<div class="t" style="left:973px;top:430px;width:57px;height:18px;line-height:18px;">进球数</div>
<div class="sel" style="left:543px;top:409px;width:61px;height:18px;"><span class="lb">Crow*</span><svg class="chev" width="10" height="7" viewBox="0 0 10 7" style="position:absolute;right:3px;top:5px"><path d="M0.8 1 L5 5.3 L9.2 1" fill="none" stroke="#000" stroke-width="2.1"/></svg></div>
<div class="sel" style="left:612px;top:409px;width:50px;height:18px;"><span class="lb">终指</span><svg class="chev" width="10" height="7" viewBox="0 0 10 7" style="position:absolute;right:3px;top:5px"><path d="M0.8 1 L5 5.3 L9.2 1" fill="none" stroke="#000" stroke-width="2.1"/></svg></div>
<div class="sel" style="left:732px;top:409px;width:69px;height:18px;"><span class="lb">平均值</span><svg class="chev" width="10" height="7" viewBox="0 0 10 7" style="position:absolute;right:3px;top:5px"><path d="M0.8 1 L5 5.3 L9.2 1" fill="none" stroke="#000" stroke-width="2.1"/></svg></div>
<div class="sel" style="left:808px;top:409px;width:51px;height:18px;"><span class="lb">终指</span><svg class="chev" width="10" height="7" viewBox="0 0 10 7" style="position:absolute;right:3px;top:5px"><path d="M0.8 1 L5 5.3 L9.2 1" fill="none" stroke="#000" stroke-width="2.1"/></svg></div>
<div class="sel" style="left:937px;top:409px;width:50px;height:18px;"><span class="lb">全场</span><svg class="chev" width="10" height="7" viewBox="0 0 10 7" style="position:absolute;right:3px;top:5px"><path d="M0.8 1 L5 5.3 L9.2 1" fill="none" stroke="#000" stroke-width="2.1"/></svg></div>
<div class="t" style="left:3px;top:448px;width:81px;height:26px;line-height:26px;color:#fff;-webkit-text-stroke:0.2px #fff">欧国联</div>
<div class="t" style="left:84px;top:448px;width:76px;height:26px;line-height:26px;">24-09-10</div>
<div class="t" style="left:160px;top:448px;width:127px;height:26px;line-height:26px;"><span style="color:#0d720d">斯洛文尼亚</span></div>
<div class="t" style="left:287px;top:448px;width:90px;height:26px;line-height:26px;"><span style="color:#c40000">3-0</span>(2-0)</div>
<div class="t" style="left:377px;top:448px;width:39px;height:26px;line-height:26px;">5-0</div>
<div class="t" style="left:416px;top:448px;width:94px;height:26px;line-height:26px;">哈萨克斯坦</div>
<div class="t" style="left:510px;top:448px;width:44px;height:26px;line-height:26px;">1.07</div>
<div class="t" style="left:554px;top:448px;width:95px;height:26px;line-height:26px;">球半</div>
<div class="t" style="left:649px;top:448px;width:46px;height:26px;line-height:26px;">0.82</div>
<div class="t" style="left:695px;top:448px;width:61px;height:26px;line-height:26px;">1.32</div>
<div class="t" style="left:756px;top:448px;width:61px;height:26px;line-height:26px;">4.92</div>
<div class="t" style="left:817px;top:448px;width:78px;height:26px;line-height:26px;">10.10</div>
<div class="t" style="left:895px;top:448px;width:38px;height:26px;line-height:26px;"><span style="color:#c40000">胜</span></div>
<div class="t" style="left:933px;top:448px;width:39px;height:26px;line-height:26px;"><span style="color:#c40000">赢</span></div>
<div class="t" style="left:972px;top:448px;width:58px;height:26px;line-height:26px;"><span style="color:#c40000">大</span></div>
<div class="t" style="left:3px;top:474px;width:81px;height:26px;line-height:26px;color:#fff;-webkit-text-stroke:0.2px #fff">欧国联</div>
<div class="t" style="left:84px;top:474px;width:76px;height:26px;line-height:26px;">24-09-07</div>
<div class="t" style="left:160px;top:474px;width:127px;height:26px;line-height:26px;"><span style="color:#0d720d">斯洛文尼亚</span></div>
<div class="t" style="left:287px;top:474px;width:90px;height:26px;line-height:26px;"><span style="color:#c40000">1-1</span>(1-1)</div>
<div class="t" style="left:377px;top:474px;width:39px;height:26px;line-height:26px;">4-7</div>
<div class="t" style="left:416px;top:474px;width:94px;height:26px;line-height:26px;">奥地利</div>
<div class="t" style="left:510px;top:474px;width:44px;height:26px;line-height:26px;">0.87</div>
<div class="t" style="left:554px;top:474px;width:95px;height:26px;line-height:26px;">受半球</div>
<div class="t" style="left:649px;top:474px;width:46px;height:26px;line-height:26px;">1.02</div>
<div class="t" style="left:695px;top:474px;width:61px;height:26px;line-height:26px;">4.02</div>
<div class="t" style="left:756px;top:474px;width:61px;height:26px;line-height:26px;">3.35</div>
<div class="t" style="left:817px;top:474px;width:78px;height:26px;line-height:26px;">1.95</div>
<div class="t" style="left:895px;top:474px;width:38px;height:26px;line-height:26px;"><span style="color:#0d720d">平</span></div>
<div class="t" style="left:933px;top:474px;width:39px;height:26px;line-height:26px;"><span style="color:#c40000">赢</span></div>
<div class="t" style="left:972px;top:474px;width:58px;height:26px;line-height:26px;"><span style="color:#0000b4">小</span></div>
<div class="t" style="left:3px;top:500px;width:81px;height:26px;line-height:26px;color:#fff;-webkit-text-stroke:0.2px #fff">欧洲杯</div>
<div class="t" style="left:84px;top:500px;width:76px;height:26px;line-height:26px;">24-07-02</div>
<div class="t" style="left:160px;top:500px;width:127px;height:26px;line-height:26px;">葡萄牙(中)</div>
<div class="t" style="left:287px;top:500px;width:90px;height:26px;line-height:26px;"><span style="color:#c40000">0-0</span>(0-0)</div>
<div class="t" style="left:377px;top:500px;width:39px;height:26px;line-height:26px;">7-3</div>
<div class="t" style="left:416px;top:500px;width:94px;height:26px;line-height:26px;"><span style="color:#0d720d">斯洛文尼亚</span></div>
<div class="t" style="left:510px;top:500px;width:44px;height:26px;line-height:26px;">1.08</div>
<div class="t" style="left:554px;top:500px;width:95px;height:26px;line-height:26px;">球半</div>
<div class="t" style="left:649px;top:500px;width:46px;height:26px;line-height:26px;">0.81</div>
<div class="t" style="left:695px;top:500px;width:61px;height:26px;line-height:26px;">1.35</div>
<div class="t" style="left:756px;top:500px;width:61px;height:26px;line-height:26px;">5.01</div>
<div class="t" style="left:817px;top:500px;width:78px;height:26px;line-height:26px;">9.34</div>
<div class="t" style="left:895px;top:500px;width:38px;height:26px;line-height:26px;"><span style="color:#0d720d">平</span></div>
<div class="t" style="left:933px;top:500px;width:39px;height:26px;line-height:26px;"><span style="color:#c40000">赢</span></div>
<div class="t" style="left:972px;top:500px;width:58px;height:26px;line-height:26px;"><span style="color:#0000b4">小</span></div>
<div class="t" style="left:3px;top:526px;width:81px;height:26px;line-height:26px;color:#fff;-webkit-text-stroke:0.2px #fff">欧洲杯</div>
<div class="t" style="left:84px;top:526px;width:76px;height:26px;line-height:26px;">24-06-26</div>
<div class="t" style="left:160px;top:526px;width:127px;height:26px;line-height:26px;">英格兰(中)</div>
<div class="t" style="left:287px;top:526px;width:90px;height:26px;line-height:26px;"><span style="color:#c40000">0-0</span>(0-0)</div>
<div class="t" style="left:377px;top:526px;width:39px;height:26px;line-height:26px;">6-0</div>
<div class="t" style="left:416px;top:526px;width:94px;height:26px;line-height:26px;"><span style="color:#0d720d">斯洛文尼亚</span></div>
<div class="t" style="left:510px;top:526px;width:44px;height:26px;line-height:26px;">0.98</div>
<div class="t" style="left:554px;top:526px;width:95px;height:26px;line-height:26px;">球半</div>
<div class="t" style="left:649px;top:526px;width:46px;height:26px;line-height:26px;">0.91</div>
<div class="t" style="left:695px;top:526px;width:61px;height:26px;line-height:26px;">1.31</div>
<div class="t" style="left:756px;top:526px;width:61px;height:26px;line-height:26px;">5.21</div>
<div class="t" style="left:817px;top:526px;width:78px;height:26px;line-height:26px;">10.81</div>
<div class="t" style="left:895px;top:526px;width:38px;height:26px;line-height:26px;"><span style="color:#0d720d">平</span></div>
<div class="t" style="left:933px;top:526px;width:39px;height:26px;line-height:26px;"><span style="color:#c40000">赢</span></div>
<div class="t" style="left:972px;top:526px;width:58px;height:26px;line-height:26px;"><span style="color:#0000b4">小</span></div>
<div class="t" style="left:3px;top:552px;width:81px;height:26px;line-height:26px;color:#fff;-webkit-text-stroke:0.2px #fff">欧洲杯</div>
<div class="t" style="left:84px;top:552px;width:76px;height:26px;line-height:26px;">24-06-20</div>
<div class="t" style="left:160px;top:552px;width:127px;height:26px;line-height:26px;"><span style="color:#0d720d">斯洛文尼亚(中)</span></div>
<div class="t" style="left:287px;top:552px;width:90px;height:26px;line-height:26px;"><span style="color:#c40000">1-1</span>(0-0)</div>
<div class="t" style="left:377px;top:552px;width:39px;height:26px;line-height:26px;">4-9</div>
<div class="t" style="left:416px;top:552px;width:94px;height:26px;line-height:26px;">塞尔维亚</div>
<div class="t" style="left:510px;top:552px;width:44px;height:26px;line-height:26px;">1.02</div>
<div class="t" style="left:554px;top:552px;width:95px;height:26px;line-height:26px;">受半/一</div>
<div class="t" style="left:649px;top:552px;width:46px;height:26px;line-height:26px;">0.87</div>
<div class="t" style="left:695px;top:552px;width:61px;height:26px;line-height:26px;">5.21</div>
<div class="t" style="left:756px;top:552px;width:61px;height:26px;line-height:26px;">3.70</div>
<div class="t" style="left:817px;top:552px;width:78px;height:26px;line-height:26px;">1.71</div>
<div class="t" style="left:895px;top:552px;width:38px;height:26px;line-height:26px;"><span style="color:#0d720d">平</span></div>
<div class="t" style="left:933px;top:552px;width:39px;height:26px;line-height:26px;"><span style="color:#c40000">赢</span></div>
<div class="t" style="left:972px;top:552px;width:58px;height:26px;line-height:26px;"><span style="color:#0000b4">小</span></div>
<div class="t" style="left:3px;top:578px;width:81px;height:26px;line-height:26px;color:#fff;-webkit-text-stroke:0.2px #fff">欧洲杯</div>
<div class="t" style="left:84px;top:578px;width:76px;height:26px;line-height:26px;">24-06-16</div>
<div class="t" style="left:160px;top:578px;width:127px;height:26px;line-height:26px;"><span style="color:#0d720d">斯洛文尼亚(中)</span></div>
<div class="t" style="left:287px;top:578px;width:90px;height:26px;line-height:26px;"><span style="color:#c40000">1-1</span>(0-1)</div>
<div class="t" style="left:377px;top:578px;width:39px;height:26px;line-height:26px;">5-9</div>
<div class="t" style="left:416px;top:578px;width:94px;height:26px;line-height:26px;">丹麦</div>
<div class="t" style="left:510px;top:578px;width:44px;height:26px;line-height:26px;">1.01</div>
<div class="t" style="left:554px;top:578px;width:95px;height:26px;line-height:26px;">受半/一</div>
<div class="t" style="left:649px;top:578px;width:46px;height:26px;line-height:26px;">0.88</div>
<div class="t" style="left:695px;top:578px;width:61px;height:26px;line-height:26px;">5.59</div>
<div class="t" style="left:756px;top:578px;width:61px;height:26px;line-height:26px;">3.60</div>
<div class="t" style="left:817px;top:578px;width:78px;height:26px;line-height:26px;">1.69</div>
<div class="t" style="left:895px;top:578px;width:38px;height:26px;line-height:26px;"><span style="color:#0d720d">平</span></div>
<div class="t" style="left:933px;top:578px;width:39px;height:26px;line-height:26px;"><span style="color:#c40000">赢</span></div>
<div class="t" style="left:972px;top:578px;width:58px;height:26px;line-height:26px;"><span style="color:#0000b4">小</span></div>
<div class="t" style="left:3px;top:604px;width:81px;height:26px;line-height:26px;color:#fff;-webkit-text-stroke:0.2px #fff">国际友谊</div>
<div class="t" style="left:84px;top:604px;width:76px;height:26px;line-height:26px;">24-06-08</div>
<div class="t" style="left:160px;top:604px;width:127px;height:26px;line-height:26px;"><span style="color:#0d720d">斯洛文尼亚</span></div>
<div class="t" style="left:287px;top:604px;width:90px;height:26px;line-height:26px;"><span style="color:#c40000">1-1</span>(1-1)</div>
<div class="t" style="left:377px;top:604px;width:39px;height:26px;line-height:26px;">4-2</div>
<div class="t" style="left:416px;top:604px;width:94px;height:26px;line-height:26px;">保加利亚</div>
<div class="t" style="left:510px;top:604px;width:44px;height:26px;line-height:26px;">1.04</div>
<div class="t" style="left:554px;top:604px;width:95px;height:26px;line-height:26px;">一球</div>
<div class="t" style="left:649px;top:604px;width:46px;height:26px;line-height:26px;">0.84</div>
<div class="t" style="left:695px;top:604px;width:61px;height:26px;line-height:26px;">1.54</div>
<div class="t" style="left:756px;top:604px;width:61px;height:26px;line-height:26px;">3.78</div>
<div class="t" style="left:817px;top:604px;width:78px;height:26px;line-height:26px;">6.50</div>
<div class="t" style="left:895px;top:604px;width:38px;height:26px;line-height:26px;"><span style="color:#0d720d">平</span></div>
<div class="t" style="left:933px;top:604px;width:39px;height:26px;line-height:26px;"><span style="color:#0000b4">输</span></div>
<div class="t" style="left:972px;top:604px;width:58px;height:26px;line-height:26px;"><span style="color:#0000b4">小</span></div>
<div class="t" style="left:3px;top:630px;width:81px;height:26px;line-height:26px;color:#fff;-webkit-text-stroke:0.2px #fff">国际友谊</div>
<div class="t" style="left:84px;top:630px;width:76px;height:26px;line-height:26px;">24-06-04</div>
<div class="t" style="left:160px;top:630px;width:127px;height:26px;line-height:26px;"><span style="color:#0d720d">斯洛文尼亚</span></div>
<div class="t" style="left:287px;top:630px;width:90px;height:26px;line-height:26px;"><span style="color:#c40000">2-1</span>(1-0)</div>
<div class="t" style="left:377px;top:630px;width:39px;height:26px;line-height:26px;">1-10</div>
<div class="t" style="left:416px;top:630px;width:94px;height:26px;line-height:26px;">亚美尼亚</div>
<div class="t" style="left:510px;top:630px;width:44px;height:26px;line-height:26px;">0.90</div>
<div class="t" style="left:554px;top:630px;width:95px;height:26px;line-height:26px;">一球</div>
<div class="t" style="left:649px;top:630px;width:46px;height:26px;line-height:26px;">0.98</div>
<div class="t" style="left:695px;top:630px;width:61px;height:26px;line-height:26px;">1.47</div>
<div class="t" style="left:756px;top:630px;width:61px;height:26px;line-height:26px;">4.17</div>
<div class="t" style="left:817px;top:630px;width:78px;height:26px;line-height:26px;">6.58</div>
<div class="t" style="left:895px;top:630px;width:38px;height:26px;line-height:26px;"><span style="color:#c40000">胜</span></div>
<div class="t" style="left:933px;top:630px;width:39px;height:26px;line-height:26px;"><span style="color:#0d720d">走</span></div>
<div class="t" style="left:972px;top:630px;width:58px;height:26px;line-height:26px;"><span style="color:#c40000">大</span></div>
<div class="t" style="left:3px;top:656px;width:81px;height:26px;line-height:26px;color:#fff;-webkit-text-stroke:0.2px #fff">国际友谊</div>
<div class="t" style="left:84px;top:656px;width:76px;height:26px;line-height:26px;">24-03-27</div>
<div class="t" style="left:160px;top:656px;width:127px;height:26px;line-height:26px;"><span style="color:#0d720d">斯洛文尼亚</span></div>
<div class="t" style="left:287px;top:656px;width:90px;height:26px;line-height:26px;"><span style="color:#c40000">2-0</span>(0-0)</div>
<div class="t" style="left:377px;top:656px;width:39px;height:26px;line-height:26px;">2-4</div>
<div class="t" style="left:416px;top:656px;width:94px;height:26px;line-height:26px;">葡萄牙</div>
<div class="t" style="left:510px;top:656px;width:44px;height:26px;line-height:26px;">0.92</div>
<div class="t" style="left:554px;top:656px;width:95px;height:26px;line-height:26px;">受一/球半</div>
<div class="t" style="left:649px;top:656px;width:46px;height:26px;line-height:26px;">0.97</div>
<div class="t" style="left:695px;top:656px;width:61px;height:26px;line-height:26px;">7.64</div>
<div class="t" style="left:756px;top:656px;width:61px;height:26px;line-height:26px;">4.50</div>
<div class="t" style="left:817px;top:656px;width:78px;height:26px;line-height:26px;">1.40</div>
<div class="t" style="left:895px;top:656px;width:38px;height:26px;line-height:26px;"><span style="color:#c40000">胜</span></div>
<div class="t" style="left:933px;top:656px;width:39px;height:26px;line-height:26px;"><span style="color:#c40000">赢</span></div>
<div class="t" style="left:972px;top:656px;width:58px;height:26px;line-height:26px;"><span style="color:#0000b4">小</span></div>
<div class="t" style="left:3px;top:682px;width:81px;height:26px;line-height:26px;color:#fff;-webkit-text-stroke:0.2px #fff">国际友谊</div>
<div class="t" style="left:84px;top:682px;width:76px;height:26px;line-height:26px;">24-03-22</div>
<div class="t" style="left:160px;top:682px;width:127px;height:26px;line-height:26px;">马耳他</div>
<div class="t" style="left:287px;top:682px;width:90px;height:26px;line-height:26px;"><span style="color:#c40000">2-2</span>(0-1)</div>
<div class="t" style="left:377px;top:682px;width:39px;height:26px;line-height:26px;">1-11</div>
<div class="t" style="left:416px;top:682px;width:94px;height:26px;line-height:26px;"><span style="color:#0d720d">斯洛文尼亚</span></div>
<div class="t" style="left:510px;top:682px;width:44px;height:26px;line-height:26px;">1.11</div>
<div class="t" style="left:554px;top:682px;width:95px;height:26px;line-height:26px;">受一球</div>
<div class="t" style="left:649px;top:682px;width:46px;height:26px;line-height:26px;">0.80</div>
<div class="t" style="left:695px;top:682px;width:61px;height:26px;line-height:26px;">7.98</div>
<div class="t" style="left:756px;top:682px;width:61px;height:26px;line-height:26px;">3.94</div>
<div class="t" style="left:817px;top:682px;width:78px;height:26px;line-height:26px;">1.44</div>
<div class="t" style="left:895px;top:682px;width:38px;height:26px;line-height:26px;"><span style="color:#0d720d">平</span></div>
<div class="t" style="left:933px;top:682px;width:39px;height:26px;line-height:26px;"><span style="color:#0000b4">输</span></div>
<div class="t" style="left:972px;top:682px;width:58px;height:26px;line-height:26px;"><span style="color:#c40000">大</span></div>
<div class="t" style="left:3px;top:708px;width:1027px;height:25px;line-height:25px;word-spacing:2px">近<span style="color:#c40000">10</span>场,胜3平7负0, 胜率:<span style="color:#c40000">30%</span> 让胜率:<span style="color:#c40000">70%</span> 大率:<span style="color:#c40000">30%</span> 单率:<span style="color:#c40000">20%</span></div>
<div style="left:1010px;top:575px;width:40px;height:22px;background:#f4f4f4;border:1px solid #c8c8c8;box-sizing:border-box;box-shadow:2px 2px 2px rgba(0,0,0,0.15)"><div class="t" style="left:5px;top:1px;width:30px;height:19px;line-height:19px;text-align:left;color:#aaa">让球</div></div></body></html>
